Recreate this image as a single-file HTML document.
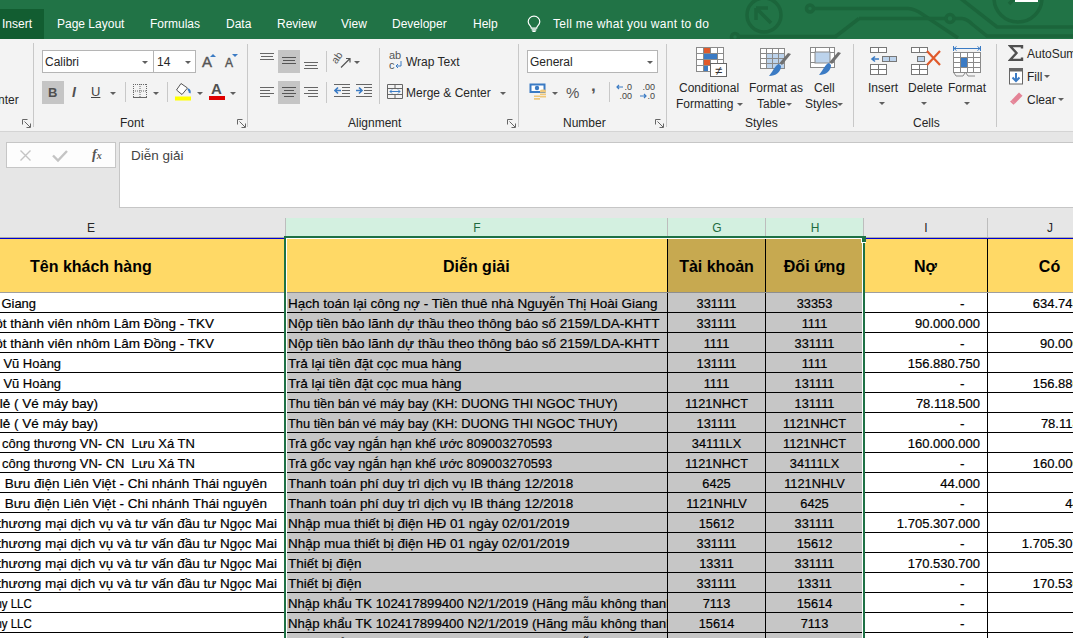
<!DOCTYPE html>
<html><head><meta charset="utf-8">
<style>
*{margin:0;padding:0;box-sizing:border-box}
html,body{width:1073px;height:638px;overflow:hidden;background:#fff;font-family:"Liberation Sans",sans-serif;position:relative}
.abs{position:absolute}
#tabs{position:absolute;left:0;top:0;width:1073px;height:39px;background:#217346}
.tab{position:absolute;top:17px;color:#fff;font-size:12px;line-height:14px;white-space:nowrap}
#ribbon{position:absolute;left:0;top:39px;width:1073px;height:93px;background:#f3f3f3;border-bottom:1px solid #d4d4d4}
.rt{position:absolute;font-size:12px;line-height:14px;color:#262626;white-space:nowrap}
.gl{position:absolute;top:116px;font-size:12px;line-height:14px;color:#262626;white-space:nowrap}
.sep{position:absolute;width:1px;background:#c8c8c8}
.dd{position:absolute;width:0;height:0;border-left:3px solid transparent;border-right:3px solid transparent;border-top:3px solid #5f5f5f}
#fbar{position:absolute;left:0;top:132px;width:1073px;height:86px;background:#e6e6e6}
#colh{position:absolute;left:0;top:218px;width:1073px;height:20px;background:#e6e6e6;border-bottom:1px solid #ababab}
.ch{position:absolute;top:218px;height:19px;font-size:12px;line-height:21px;text-align:center;color:#262626}
.t{position:absolute;height:19px;font-size:13.5px;line-height:21px;white-space:pre;color:#000}
.c{text-align:center}
.fc{position:absolute;left:288px;width:379px;height:19px;overflow:hidden;font-size:13.5px;line-height:21px;white-space:nowrap;color:#000}
.fc span{display:inline-block;transform-origin:0 50%}
.num{font-size:13px}
.gh{font-size:12.8px}
.t,.fc{-webkit-text-stroke:0.2px #000}
.hl{position:absolute;left:0;width:1073px;height:1px;background:#000}
.vl{position:absolute;width:1px;background:#000}
</style></head><body>

<!-- tab bar -->
<div id="tabs">
  <div class="abs" style="left:0;top:9px;width:44px;height:30px;background:#125d31"></div>
  <svg class="abs" style="left:0;top:0" width="1073" height="39" viewBox="0 0 1073 39">
    <g fill="none" stroke="#1b653b" stroke-width="3.5">
      <circle cx="764" cy="15" r="17"/>
      <path d="M756 8 L771 23 M756 8 L756 20 M756 8 L768 8" stroke-width="3.5"/>
      <circle cx="810" cy="8.5" r="3.5"/>
      <path d="M814 8.5 L900 8.5 L908 8.5 Q915 9 922 14 L958 38"/>
      <path d="M859 18.5 L945 18.5 M955 18.5 L962 18.5 Q967 19 972 24 L987 36 L1073 36"/>
      <circle cx="950" cy="18.5" r="4"/>
      <path d="M835 37 L859 18.5"/>
      <circle cx="735" cy="37" r="3.5"/>
      <path d="M739 36.5 L836 36.5"/>
      <path d="M960 -2 L997 27 L1073 27"/>
      <circle cx="1018" cy="-2" r="24"/>
      <path d="M1009 4 L1016 -3"/>
    </g>
    <rect x="1015" y="0" width="23" height="2" fill="#fff"/>
  </svg>
  <div class="tab" style="left:2px">Insert</div>
  <div class="tab" style="left:57px">Page Layout</div>
  <div class="tab" style="left:150px">Formulas</div>
  <div class="tab" style="left:226px">Data</div>
  <div class="tab" style="left:277px">Review</div>
  <div class="tab" style="left:341px">View</div>
  <div class="tab" style="left:392px">Developer</div>
  <div class="tab" style="left:473px">Help</div>
  <svg class="abs" style="left:526px;top:15px" width="16" height="17" viewBox="0 0 16 17">
    <path d="M8 1.2 C4.6 1.2 2.2 3.7 2.2 6.7 C2.2 8.8 3.4 10 4.4 11.1 C5 11.8 5.3 12.4 5.3 13.2 L10.7 13.2 C10.7 12.4 11 11.8 11.6 11.1 C12.6 10 13.8 8.8 13.8 6.7 C13.8 3.7 11.4 1.2 8 1.2 Z" fill="none" stroke="#fff" stroke-width="1.2"/>
    <path d="M5.6 14.8 L10.4 14.8 M6.4 16.3 L9.6 16.3" stroke="#fff" stroke-width="1.2"/>
  </svg>
  <div class="tab" style="left:553px;letter-spacing:0.3px">Tell me what you want to do</div>
</div>

<!-- ribbon -->
<div id="ribbon"></div>
<!-- clipboard remnant -->
<div class="rt" style="left:-2px;top:93px">nter</div>
<svg class="abs" style="left:22px;top:119px" width="10" height="10" viewBox="0 0 10 10"><path d="M0.5 5.5 V0.5 H5.5 M2.5 2.5 L8 8 M8.5 4.5 V8.5 H4.5" stroke="#666" stroke-width="1" fill="none"/></svg>
<div class="sep" style="left:33px;top:43px;height:84px"></div>

<!-- Font group -->
<div class="abs" style="left:42px;top:50px;width:112px;height:23px;background:#fff;border:1px solid #b5b5b5"></div>
<div class="abs" style="left:153px;top:50px;width:43px;height:23px;background:#fff;border:1px solid #b5b5b5"></div>
<div class="rt" style="left:45px;top:55px">Calibri</div>
<div class="dd" style="left:142px;top:61px"></div>
<div class="rt" style="left:157px;top:55px">14</div>
<div class="dd" style="left:185px;top:61px"></div>
<div class="abs" style="left:202px;top:54px;font-size:15px;line-height:16px;color:#555;-webkit-text-stroke:0.4px #555">A</div>
<div class="abs" style="left:210px;top:54px;width:0;height:0;border-left:3px solid transparent;border-right:3px solid transparent;border-bottom:3px solid #3b7bc4"></div>
<div class="abs" style="left:225px;top:56px;font-size:12px;line-height:14px;color:#555;-webkit-text-stroke:0.4px #555">A</div>
<div class="abs" style="left:232px;top:54px;width:0;height:0;border-left:3px solid transparent;border-right:3px solid transparent;border-top:3px solid #3b7bc4"></div>

<div class="abs" style="left:42px;top:81px;width:22px;height:23px;background:#c5c5c5"></div>
<div class="abs" style="left:48px;top:85px;font-size:13px;font-weight:bold;line-height:15px;color:#505050">B</div>
<div class="abs" style="left:72px;top:85px;font-size:14px;font-style:italic;font-weight:bold;line-height:15px;color:#505050">I</div>
<div class="abs" style="left:91px;top:84px;font-size:13px;line-height:15px;color:#444;text-decoration:underline">U</div>
<div class="dd" style="left:110px;top:92px"></div>
<div class="sep" style="left:125px;top:82px;height:20px"></div>
<svg class="abs" style="left:133px;top:84px" width="14" height="14" viewBox="0 0 14 14"><path d="M0.5 0 V13 M7 0 V13 M13.5 0 V13 M0 0.5 H14 M0 7 H14" stroke="#666" stroke-width="1" stroke-dasharray="1 1" fill="none"/><path d="M0 13.5 H14" stroke="#666" stroke-width="1"/></svg>
<div class="dd" style="left:153px;top:92px"></div>
<div class="sep" style="left:167px;top:82px;height:20px"></div>
<svg class="abs" style="left:175px;top:82px" width="18" height="19" viewBox="0 0 18 19"><path d="M6 1.5 L1.5 8 L7 12.5 L12.5 6 Z" fill="#fff" stroke="#555" stroke-width="1"/><path d="M13 7 Q15.5 9 14.5 11" stroke="#3b7bc4" stroke-width="2" fill="none"/><rect x="0" y="14.5" width="16" height="4" fill="#ffff00"/></svg>
<div class="dd" style="left:197px;top:92px"></div>
<div class="abs" style="left:211px;top:81px;font-size:15px;font-weight:bold;line-height:16px;color:#505050">A</div>
<div class="abs" style="left:209px;top:96px;width:16px;height:4px;background:#e00000"></div>
<div class="dd" style="left:230px;top:92px"></div>
<div class="gl" style="left:120px">Font</div>
<svg class="abs" style="left:237px;top:119px" width="10" height="10" viewBox="0 0 10 10"><path d="M0.5 5.5 V0.5 H5.5 M2.5 2.5 L8 8 M8.5 4.5 V8.5 H4.5" stroke="#666" stroke-width="1" fill="none"/></svg>
<div class="sep" style="left:247px;top:44px;height:83px"></div>

<!-- Alignment group -->
<svg class="abs" style="left:260px;top:51px" width="16" height="12" viewBox="0 0 16 12"><path d="M0 2.5 H14 M1 5.5 H13 M0 8.5 H14" stroke="#666" stroke-width="1"/></svg>
<div class="abs" style="left:278px;top:50px;width:22px;height:23px;background:#c5c5c5"></div>
<svg class="abs" style="left:282px;top:51px" width="16" height="20" viewBox="0 0 16 20"><path d="M0 6.5 H14 M1 9.5 H13 M0 12.5 H14" stroke="#555" stroke-width="1"/></svg>
<svg class="abs" style="left:304px;top:52px" width="16" height="20" viewBox="0 0 16 20"><path d="M0 10.5 H14 M1 13.5 H13 M0 16.5 H14" stroke="#666" stroke-width="1"/></svg>
<div class="sep" style="left:326px;top:51px;height:21px"></div>
<svg class="abs" style="left:332px;top:50px" width="22" height="20" viewBox="0 0 22 20"><text x="0" y="0" font-size="10.5" fill="#555" font-family="Liberation Sans" transform="translate(4.5 14.5) rotate(-55)">ab</text><path d="M9 17.5 L18 8.5 M14 8.5 H18 V12.5" stroke="#555" stroke-width="1.2" fill="none"/></svg>
<div class="dd" style="left:354px;top:61px"></div>
<div class="sep" style="left:379px;top:48px;height:56px"></div>
<div class="abs" style="left:389px;top:50px;font-size:11px;line-height:10px;color:#555">ab<br>c</div>
<svg class="abs" style="left:395px;top:61px" width="8" height="8" viewBox="0 0 8 8"><path d="M6 0 V5 H1 M3 3 L1 5 L3 7" stroke="#3b7bc4" stroke-width="1" fill="none"/></svg>
<div class="rt" style="left:406px;top:55px">Wrap Text</div>

<svg class="abs" style="left:260px;top:86px" width="16" height="16" viewBox="0 0 16 16"><path d="M0 1.5 H14 M0 4.5 H10 M0 7.5 H14 M0 10.5 H10" stroke="#666" stroke-width="1"/></svg>
<div class="abs" style="left:278px;top:81px;width:22px;height:23px;background:#c5c5c5"></div>
<svg class="abs" style="left:282px;top:86px" width="16" height="16" viewBox="0 0 16 16"><path d="M0 1.5 H14 M2 4.5 H12 M0 7.5 H14 M2 10.5 H12" stroke="#555" stroke-width="1"/></svg>
<svg class="abs" style="left:304px;top:86px" width="16" height="16" viewBox="0 0 16 16"><path d="M0 1.5 H14 M4 4.5 H14 M0 7.5 H14 M4 10.5 H14" stroke="#666" stroke-width="1"/></svg>
<div class="sep" style="left:326px;top:82px;height:21px"></div>
<svg class="abs" style="left:334px;top:84px" width="40" height="16" viewBox="0 0 40 16"><path d="M0 0.5 H16 M8 3.5 H16 M8 6.5 H16 M8 9.5 H16 M0 12.5 H16" stroke="#666" stroke-width="1"/><path d="M1 6.5 H7 M4 3.5 L1 6.5 L4 9.5" stroke="#3b7bc4" stroke-width="1.6" fill="none"/><path d="M22 0.5 H38 M30 3.5 H38 M30 6.5 H38 M30 9.5 H38 M22 12.5 H38" stroke="#666" stroke-width="1"/><path d="M22 6.5 H28 M25 3.5 L28 6.5 L25 9.5" stroke="#3b7bc4" stroke-width="1.6" fill="none"/></svg>
<svg class="abs" style="left:387px;top:84px" width="16" height="16" viewBox="0 0 16 16"><path d="M0.5 0.5 H15.5 V14.5 H0.5 Z M0.5 4.5 H15.5 M0.5 10.5 H15.5 M8 0.5 V4.5 M8 10.5 V14.5" stroke="#666" stroke-width="1" fill="none"/><path d="M3 7.5 H13 M5 5.5 L3 7.5 L5 9.5 M11 5.5 L13 7.5 L11 9.5" stroke="#3b7bc4" stroke-width="1" fill="none"/></svg>
<div class="rt" style="left:406px;top:86px">Merge &amp; Center</div>
<div class="dd" style="left:500px;top:92px"></div>
<div class="gl" style="left:348px">Alignment</div>
<svg class="abs" style="left:507px;top:119px" width="10" height="10" viewBox="0 0 10 10"><path d="M0.5 5.5 V0.5 H5.5 M2.5 2.5 L8 8 M8.5 4.5 V8.5 H4.5" stroke="#666" stroke-width="1" fill="none"/></svg>
<div class="sep" style="left:518px;top:44px;height:83px"></div>

<!-- Number group -->
<div class="abs" style="left:527px;top:50px;width:131px;height:23px;background:#fff;border:1px solid #b5b5b5"></div>
<div class="rt" style="left:530px;top:55px">General</div>
<div class="dd" style="left:647px;top:61px"></div>
<svg class="abs" style="left:529px;top:83px" width="20" height="18" viewBox="0 0 20 18"><rect x="0.5" y="0.5" width="16" height="9.5" fill="#3b7bc4"/><rect x="2.5" y="2.5" width="12" height="5.5" fill="#fff"/><circle cx="8" cy="5" r="2.2" fill="#3b7bc4"/><path d="M11 8 h6 v1.6 h-6 z M11 10.4 h6 v1.6 h-6 z M11 12.8 h6 v1.6 h-6 z" fill="#f0c87a"/><path d="M5 12.5 h6 v1.6 h-6 z M5 15 h6 v1.8 h-6 z" fill="#f0c87a"/><ellipse cx="14" cy="7.5" rx="3" ry="1" fill="#f0c87a"/></svg>
<div class="dd" style="left:552px;top:92px"></div>
<div class="abs" style="left:566px;top:84px;font-size:15px;line-height:17px;color:#555">%</div>
<div class="abs" style="left:591px;top:77px;font-size:17px;font-weight:bold;line-height:17px;color:#555">,</div>
<div class="sep" style="left:609px;top:82px;height:20px"></div>
<div class="abs" style="left:618px;top:83px;font-size:9px;line-height:9px;color:#444;text-align:right;width:14px">.0<br>.00</div>
<svg class="abs" style="left:616px;top:84px" width="8" height="6" viewBox="0 0 8 6"><path d="M1 3 H7 M3 1 L1 3 L3 5" stroke="#3b7bc4" stroke-width="1.2" fill="none"/></svg>
<div class="abs" style="left:641px;top:83px;font-size:9px;line-height:9px;color:#444;text-align:right;width:14px">.00<br>.0</div>
<svg class="abs" style="left:640px;top:93px" width="8" height="6" viewBox="0 0 8 6"><path d="M0 3 H6 M4 1 L6 3 L4 5" stroke="#3b7bc4" stroke-width="1.2" fill="none"/></svg>
<div class="gl" style="left:563px">Number</div>
<svg class="abs" style="left:655px;top:119px" width="10" height="10" viewBox="0 0 10 10"><path d="M0.5 5.5 V0.5 H5.5 M2.5 2.5 L8 8 M8.5 4.5 V8.5 H4.5" stroke="#666" stroke-width="1" fill="none"/></svg>
<div class="sep" style="left:666px;top:44px;height:83px"></div>

<!-- Styles group -->
<svg class="abs" style="left:696px;top:47px" width="31" height="31" viewBox="0 0 31 31">
  <rect x="0.5" y="0.5" width="27" height="24" fill="#fff" stroke="#8a8a8a"/>
  <path d="M0.5 6.5 H27.5 M0.5 12.5 H27.5 M0.5 18.5 H27.5 M7.5 0.5 V24.5 M14.5 0.5 V24.5 M21.5 0.5 V24.5" stroke="#8a8a8a" stroke-width="1"/>
  <rect x="8" y="1" width="6" height="5" fill="#e05a2b"/><rect x="8" y="7" width="13" height="5" fill="#3b7bc4"/><rect x="8" y="13" width="6" height="5" fill="#e05a2b"/><rect x="8" y="19" width="4" height="5" fill="#3b7bc4"/>
  <rect x="14.5" y="16.5" width="16" height="13" fill="#fff" stroke="#666"/>
  <text x="22.5" y="27.5" font-size="13" text-anchor="middle" fill="#333" font-family="Liberation Sans">≠</text>
</svg>
<div class="rt" style="left:679px;top:81px">Conditional</div>
<div class="rt" style="left:676px;top:97px">Formatting</div>
<div class="dd" style="left:737px;top:103px"></div>
<svg class="abs" style="left:760px;top:48px" width="32" height="30" viewBox="0 0 32 30">
  <rect x="0.5" y="0.5" width="24" height="20" fill="#fff" stroke="#8a8a8a"/>
  <rect x="6" y="5" width="18" height="15" fill="#bcd3ec"/>
  <path d="M0.5 5.5 H24.5 M0.5 10.5 H24.5 M0.5 15.5 H24.5 M6.5 0.5 V20.5 M12.5 0.5 V20.5 M18.5 0.5 V20.5" stroke="#8a8a8a" stroke-width="1"/>
  <path d="M31 6 L22 17 L19.5 15 L28 5 Z" fill="#707070"/>
  <path d="M19 16 C15 17 14 22 9 28 C16 28 21 24 21 18 Z" fill="#3b7bc4"/>
</svg>
<div class="rt" style="left:749px;top:81px">Format as</div>
<div class="rt" style="left:757px;top:97px">Table</div>
<div class="dd" style="left:786px;top:103px"></div>
<svg class="abs" style="left:810px;top:47px" width="32" height="30" viewBox="0 0 32 30">
  <rect x="0.5" y="0.5" width="24" height="20" fill="#fff" stroke="#8a8a8a"/>
  <rect x="5" y="5" width="15" height="11" fill="#bcd3ec" stroke="#8a8a8a"/>
  <path d="M0.5 5.5 H5 M20 5.5 H24.5 M0.5 15.5 H5 M20 15.5 H24.5 M5.5 0.5 V5 M19.5 0.5 V5" stroke="#8a8a8a" stroke-width="1"/>
  <path d="M31 6 L22 17 L19.5 15 L28 5 Z" fill="#707070"/>
  <path d="M19 16 C15 17 14 22 9 28 C16 28 21 24 21 18 Z" fill="#3b7bc4"/>
</svg>
<div class="rt" style="left:814px;top:81px">Cell</div>
<div class="rt" style="left:805px;top:97px">Styles</div>
<div class="dd" style="left:837px;top:103px"></div>
<div class="gl" style="left:745px">Styles</div>
<div class="sep" style="left:853px;top:44px;height:83px"></div>

<!-- Cells group -->
<svg class="abs" style="left:870px;top:47px" width="28" height="28" viewBox="0 0 28 28">
  <rect x="0.5" y="0.5" width="8" height="5" fill="#fff" stroke="#777"/><rect x="8.5" y="0.5" width="8" height="5" fill="#fff" stroke="#777"/>
  <rect x="12.5" y="9.5" width="7" height="5" fill="#bcd3ec" stroke="#777"/><rect x="19.5" y="9.5" width="7" height="5" fill="#bcd3ec" stroke="#777"/>
  <path d="M2 12 H9 M5 9.5 L2 12 L5 14.5" stroke="#3b7bc4" stroke-width="1.6" fill="none"/>
  <rect x="0.5" y="17.5" width="8" height="5" fill="#fff" stroke="#777"/><rect x="8.5" y="17.5" width="8" height="5" fill="#fff" stroke="#777"/>
  <rect x="0.5" y="22.5" width="8" height="5" fill="#fff" stroke="#777"/><rect x="8.5" y="22.5" width="8" height="5" fill="#fff" stroke="#777"/>
</svg>
<div class="rt" style="left:868px;top:81px">Insert</div>
<div class="dd" style="left:879px;top:102px"></div>
<svg class="abs" style="left:911px;top:47px" width="30" height="28" viewBox="0 0 30 28">
  <rect x="0.5" y="0.5" width="8" height="5" fill="#fff" stroke="#777"/><rect x="8.5" y="0.5" width="8" height="5" fill="#fff" stroke="#777"/>
  <rect x="6.5" y="9.5" width="7" height="5" fill="#bcd3ec" stroke="#777"/>
  <rect x="0.5" y="17.5" width="8" height="5" fill="#fff" stroke="#777"/><rect x="8.5" y="17.5" width="8" height="5" fill="#fff" stroke="#777"/>
  <rect x="0.5" y="22.5" width="8" height="5" fill="#fff" stroke="#777"/><rect x="8.5" y="22.5" width="8" height="5" fill="#fff" stroke="#777"/>
  <path d="M16 4 L29 18 M29 4 L16 18" stroke="#e05a2b" stroke-width="2.2"/>
</svg>
<div class="rt" style="left:908px;top:81px">Delete</div>
<div class="dd" style="left:921px;top:102px"></div>
<svg class="abs" style="left:953px;top:46px" width="29" height="31" viewBox="0 0 29 31">
  <path d="M1 2.5 H27 M3.5 0.5 L1 2.5 L3.5 4.5 M24.5 0.5 L27 2.5 L24.5 4.5 M0.5 0 V5 M27.5 0 V5" stroke="#3b7bc4" stroke-width="1" fill="none"/>
  <rect x="0.5" y="6.5" width="27" height="20" fill="#fff" stroke="#8a8a8a"/>
  <path d="M0.5 11.5 H27.5 M0.5 16.5 H27.5 M0.5 21.5 H27.5 M7.5 6.5 V26.5 M14.5 6.5 V26.5 M20.5 6.5 V26.5" stroke="#8a8a8a" stroke-width="1"/>
  <rect x="8" y="12" width="6" height="9" fill="#3b7bc4"/>
  <path d="M1 27 L3 30 H10 L12 27 M13 27 L15 30 H22" stroke="#8a8a8a" stroke-width="1" fill="none"/>
</svg>
<div class="rt" style="left:948px;top:81px">Format</div>
<div class="dd" style="left:964px;top:102px"></div>
<div class="gl" style="left:913px">Cells</div>
<div class="sep" style="left:996px;top:44px;height:83px"></div>

<!-- Editing group -->
<svg class="abs" style="left:1008px;top:45px" width="16" height="16" viewBox="0 0 16 16"><path d="M14 3.5 V1 H2 L8.5 8 L2 15 H14 V12.5" stroke="#505050" stroke-width="2.4" fill="none"/></svg>
<div class="rt" style="left:1027px;top:47px">AutoSum</div>
<svg class="abs" style="left:1009px;top:68px" width="14" height="17" viewBox="0 0 14 17"><rect x="0.5" y="0.5" width="13" height="15.5" fill="#fff" stroke="#666"/><rect x="0.5" y="0.5" width="13" height="3" fill="#666"/><path d="M7 5 V13 M3.5 9.5 L7 13 L10.5 9.5" stroke="#3b7bc4" stroke-width="2" fill="none"/></svg>
<div class="rt" style="left:1027px;top:70px">Fill</div>
<div class="dd" style="left:1044px;top:75px"></div>
<svg class="abs" style="left:1009px;top:92px" width="14" height="13" viewBox="0 0 14 13"><path d="M10 0.5 L13.5 3.8 L6 11.5 L2.5 8.2 Z" fill="#e48396"/><path d="M1 9.5 L2.5 8.2 L6 11.5 L4.5 12.8 Z" fill="#e48396"/></svg>
<div class="rt" style="left:1027px;top:93px">Clear</div>
<div class="dd" style="left:1058px;top:98px"></div>


<!-- formula bar -->
<div id="fbar"></div>
<div class="abs" style="left:6px;top:142px;width:110px;height:26px;background:#fdfdfd;border:1px solid #c6c6c6"></div>
<svg class="abs" style="left:18px;top:148px" width="100" height="16" viewBox="0 0 100 16">
  <path d="M2.5 2.5 L12.5 12.5 M12.5 2.5 L2.5 12.5" stroke="#c4c4c4" stroke-width="1.4" fill="none"/>
  <path d="M35 7.5 L40 12.5 L49 3" stroke="#c4c4c4" stroke-width="2.4" fill="none"/>
</svg>
<div class="abs" style="left:92px;top:147px;font-family:'Liberation Serif',serif;font-style:italic;font-weight:bold;font-size:14px;color:#555;line-height:16px">f<span style="font-size:10px">x</span></div>
<div class="abs" style="left:119px;top:142px;width:960px;height:66px;background:#fff;border:1px solid #c6c6c6"></div>
<div class="abs" style="left:131px;top:148px;font-size:13.5px;line-height:16px;color:#444">Diễn giải</div>

<!-- column headers -->
<div id="colh"></div>
<div class="abs" style="left:285px;top:218px;width:578px;height:19px;background:#d3f0e0"></div>
<div class="abs" style="left:285px;top:218px;width:1px;height:19px;background:#bdbdbd"></div>
<div class="abs" style="left:667px;top:218px;width:1px;height:19px;background:#bdbdbd"></div>
<div class="abs" style="left:765px;top:218px;width:1px;height:19px;background:#bdbdbd"></div>
<div class="abs" style="left:863px;top:218px;width:1px;height:19px;background:#bdbdbd"></div>
<div class="abs" style="left:987px;top:218px;width:1px;height:19px;background:#bdbdbd"></div>
<div class="ch" style="left:41px;width:100px">E</div>
<div class="ch" style="left:427px;width:100px;color:#1e6b3f">F</div>
<div class="ch" style="left:667px;width:100px;color:#1e6b3f">G</div>
<div class="ch" style="left:765px;width:100px;color:#1e6b3f">H</div>
<div class="ch" style="left:876px;width:100px">I</div>
<div class="ch" style="left:1000px;width:100px">J</div>

<!-- header row -->
<div class="abs" style="left:0;top:238px;width:1073px;height:1px;background:#0000d4"></div>
<div class="abs" style="left:0;top:239px;width:1073px;height:53px;background:#ffd966"></div>
<div class="abs" style="left:668px;top:239px;width:195px;height:53px;background:#c7a950"></div>
<div class="abs" style="left:0;top:292px;width:1073px;height:1px;background:#9e9e9e"></div>
<div class="abs" style="left:287px;top:292px;width:575px;height:1px;background:#8e8e8e"></div>
<div class="abs" style="left:667px;top:239px;width:1px;height:53px;background:#000"></div>
<div class="abs" style="left:765px;top:239px;width:1px;height:53px;background:#000"></div>
<div class="abs" style="left:987px;top:239px;width:1px;height:53px;background:#000"></div>
<div class="abs" style="left:0;top:257px;width:285px;text-align:center;font-weight:bold;font-size:16px;line-height:20px;padding-left:-0px"><span style="position:absolute;left:30px">Tên khách hàng</span></div>
<div class="abs" style="left:443px;top:257px;font-weight:bold;font-size:16px;line-height:20px">Diễn giải</div>
<div class="abs" style="left:668px;top:257px;width:97px;text-align:center;font-weight:bold;font-size:16px;line-height:20px">Tài khoản</div>
<div class="abs" style="left:766px;top:257px;width:97px;text-align:center;font-weight:bold;font-size:16px;line-height:20px">Đối ứng</div>
<div class="abs" style="left:864px;top:257px;width:123px;text-align:center;font-weight:bold;font-size:16px;line-height:20px">Nợ</div>
<div class="abs" style="left:988px;top:257px;width:123px;text-align:center;font-weight:bold;font-size:16px;line-height:20px">Có</div>

<!-- data region -->
<div class="abs" style="left:287px;top:293px;width:575px;height:345px;background:#c6c6c6"></div>
<div class="vl" style="left:667px;top:293px;height:345px"></div>
<div class="vl" style="left:765px;top:293px;height:345px"></div>
<div class="vl" style="left:987px;top:293px;height:345px"></div>
<div class="t e" style="top:293px;right:1037.0px;transform:scaleX(0.96);transform-origin:100% 50%;">Giang</div>
<div class="fc" style="top:293px"><span style="">Hạch toán lại công nợ - Tiền thuê nhà Nguyễn Thị Hoài Giang</span></div>
<div class="t c gh" style="top:293px;left:668px;width:97px">331111</div>
<div class="t c gh" style="top:293px;left:766px;width:97px">33353</div>
<div class="t" style="top:293px;left:960px">-</div>
<div class="t num" style="top:293px;right:-32px">634.745.000</div>
<div class="hl" style="top:312px"></div>
<div class="t e" style="top:313px;right:859.0px;">ột thành viên nhôm Lâm Đồng - TKV</div>
<div class="fc" style="top:313px"><span style="">Nộp tiền bảo lãnh dự thầu theo thông báo số 2159/LDA-KHTT</span></div>
<div class="t c gh" style="top:313px;left:668px;width:97px">331111</div>
<div class="t c gh" style="top:313px;left:766px;width:97px">1111</div>
<div class="t num" style="top:313px;right:93px">90.000.000</div>
<div class="hl" style="top:332px"></div>
<div class="t e" style="top:333px;right:859.0px;">ột thành viên nhôm Lâm Đồng - TKV</div>
<div class="fc" style="top:333px"><span style="">Nộp tiền bảo lãnh dự thầu theo thông báo số 2159/LDA-KHTT</span></div>
<div class="t c gh" style="top:333px;left:668px;width:97px">1111</div>
<div class="t c gh" style="top:333px;left:766px;width:97px">331111</div>
<div class="t" style="top:333px;left:960px">-</div>
<div class="t num" style="top:333px;right:-32px">90.000.000</div>
<div class="hl" style="top:352px"></div>
<div class="t e" style="top:353px;right:1011.5px;transform:scaleX(0.96);transform-origin:100% 50%;">Vũ Hoàng</div>
<div class="fc" style="top:353px"><span style="">Trả lại tiền đặt cọc mua hàng</span></div>
<div class="t c gh" style="top:353px;left:668px;width:97px">131111</div>
<div class="t c gh" style="top:353px;left:766px;width:97px">1111</div>
<div class="t num" style="top:353px;right:93px">156.880.750</div>
<div class="hl" style="top:372px"></div>
<div class="t e" style="top:373px;right:1011.5px;transform:scaleX(0.96);transform-origin:100% 50%;">Vũ Hoàng</div>
<div class="fc" style="top:373px"><span style="">Trả lại tiền đặt cọc mua hàng</span></div>
<div class="t c gh" style="top:373px;left:668px;width:97px">1111</div>
<div class="t c gh" style="top:373px;left:766px;width:97px">131111</div>
<div class="t" style="top:373px;left:960px">-</div>
<div class="t num" style="top:373px;right:-32px">156.880.750</div>
<div class="hl" style="top:392px"></div>
<div class="t e" style="top:393px;right:975.0px;">lẻ ( Vé máy bay)</div>
<div class="fc" style="top:393px"><span style="transform:scaleX(0.95);">Thu tiền bán vé máy bay (KH: DUONG THI NGOC THUY)</span></div>
<div class="t c gh" style="top:393px;left:668px;width:97px">1121NHCT</div>
<div class="t c gh" style="top:393px;left:766px;width:97px">131111</div>
<div class="t num" style="top:393px;right:93px">78.118.500</div>
<div class="hl" style="top:412px"></div>
<div class="t e" style="top:413px;right:975.0px;">lẻ ( Vé máy bay)</div>
<div class="fc" style="top:413px"><span style="transform:scaleX(0.95);">Thu tiền bán vé máy bay (KH: DUONG THI NGOC THUY)</span></div>
<div class="t c gh" style="top:413px;left:668px;width:97px">131111</div>
<div class="t c gh" style="top:413px;left:766px;width:97px">1121NHCT</div>
<div class="t" style="top:413px;left:960px">-</div>
<div class="t num" style="top:413px;right:-32px">78.118.500</div>
<div class="hl" style="top:432px"></div>
<div class="t e" style="top:433px;right:878.0px;transform:scaleX(0.96);transform-origin:100% 50%;">công thương VN- CN  Lưu Xá TN</div>
<div class="fc" style="top:433px"><span style="transform:scaleX(0.951);">Trả gốc vay ngắn hạn khế ước 809003270593</span></div>
<div class="t c gh" style="top:433px;left:668px;width:97px">34111LX</div>
<div class="t c gh" style="top:433px;left:766px;width:97px">1121NHCT</div>
<div class="t num" style="top:433px;right:93px">160.000.000</div>
<div class="hl" style="top:452px"></div>
<div class="t e" style="top:453px;right:878.0px;transform:scaleX(0.96);transform-origin:100% 50%;">công thương VN- CN  Lưu Xá TN</div>
<div class="fc" style="top:453px"><span style="transform:scaleX(0.951);">Trả gốc vay ngắn hạn khế ước 809003270593</span></div>
<div class="t c gh" style="top:453px;left:668px;width:97px">1121NHCT</div>
<div class="t c gh" style="top:453px;left:766px;width:97px">34111LX</div>
<div class="t" style="top:453px;left:960px">-</div>
<div class="t num" style="top:453px;right:-32px">160.000.000</div>
<div class="hl" style="top:472px"></div>
<div class="t e" style="top:473px;right:806.0px;">Bưu điện Liên Việt - Chi nhánh Thái nguyên</div>
<div class="fc" style="top:473px"><span style="">Thanh toán phí duy trì dịch vụ IB tháng 12/2018</span></div>
<div class="t c gh" style="top:473px;left:668px;width:97px">6425</div>
<div class="t c gh" style="top:473px;left:766px;width:97px">1121NHLV</div>
<div class="t num" style="top:473px;right:93px">44.000</div>
<div class="hl" style="top:492px"></div>
<div class="t e" style="top:493px;right:806.0px;">Bưu điện Liên Việt - Chi nhánh Thái nguyên</div>
<div class="fc" style="top:493px"><span style="">Thanh toán phí duy trì dịch vụ IB tháng 12/2018</span></div>
<div class="t c gh" style="top:493px;left:668px;width:97px">1121NHLV</div>
<div class="t c gh" style="top:493px;left:766px;width:97px">6425</div>
<div class="t" style="top:493px;left:960px">-</div>
<div class="t num" style="top:493px;right:-32px">44.000</div>
<div class="hl" style="top:512px"></div>
<div class="t e" style="top:513px;right:796.0px;">thương mại dịch vụ và tư vấn đầu tư Ngọc Mai</div>
<div class="fc" style="top:513px"><span style="">Nhập mua thiết bị điện HĐ 01 ngày 02/01/2019</span></div>
<div class="t c gh" style="top:513px;left:668px;width:97px">15612</div>
<div class="t c gh" style="top:513px;left:766px;width:97px">331111</div>
<div class="t num" style="top:513px;right:93px">1.705.307.000</div>
<div class="hl" style="top:532px"></div>
<div class="t e" style="top:533px;right:796.0px;">thương mại dịch vụ và tư vấn đầu tư Ngọc Mai</div>
<div class="fc" style="top:533px"><span style="">Nhập mua thiết bị điện HĐ 01 ngày 02/01/2019</span></div>
<div class="t c gh" style="top:533px;left:668px;width:97px">331111</div>
<div class="t c gh" style="top:533px;left:766px;width:97px">15612</div>
<div class="t" style="top:533px;left:960px">-</div>
<div class="t num" style="top:533px;right:-32px">1.705.307.000</div>
<div class="hl" style="top:552px"></div>
<div class="t e" style="top:553px;right:796.0px;">thương mại dịch vụ và tư vấn đầu tư Ngọc Mai</div>
<div class="fc" style="top:553px"><span style="">Thiết bị điện</span></div>
<div class="t c gh" style="top:553px;left:668px;width:97px">13311</div>
<div class="t c gh" style="top:553px;left:766px;width:97px">331111</div>
<div class="t num" style="top:553px;right:93px">170.530.700</div>
<div class="hl" style="top:572px"></div>
<div class="t e" style="top:573px;right:796.0px;">thương mại dịch vụ và tư vấn đầu tư Ngọc Mai</div>
<div class="fc" style="top:573px"><span style="">Thiết bị điện</span></div>
<div class="t c gh" style="top:573px;left:668px;width:97px">331111</div>
<div class="t c gh" style="top:573px;left:766px;width:97px">13311</div>
<div class="t" style="top:573px;left:960px">-</div>
<div class="t num" style="top:573px;right:-32px">170.530.700</div>
<div class="hl" style="top:592px"></div>
<div class="t e" style="top:593px;right:1041.0px;transform:scaleX(0.85);transform-origin:100% 50%;">ny LLC</div>
<div class="fc" style="top:593px"><span style="transform:scaleX(0.977);">Nhập khẩu TK 102417899400 N2/1/2019 (Hãng mẫu không thanh toán)</span></div>
<div class="t c gh" style="top:593px;left:668px;width:97px">7113</div>
<div class="t c gh" style="top:593px;left:766px;width:97px">15614</div>
<div class="t" style="top:593px;left:960px">-</div>
<div class="hl" style="top:612px"></div>
<div class="t e" style="top:613px;right:1041.0px;transform:scaleX(0.85);transform-origin:100% 50%;">ny LLC</div>
<div class="fc" style="top:613px"><span style="transform:scaleX(0.977);">Nhập khẩu TK 102417899400 N2/1/2019 (Hãng mẫu không thanh toán)</span></div>
<div class="t c gh" style="top:613px;left:668px;width:97px">15614</div>
<div class="t c gh" style="top:613px;left:766px;width:97px">7113</div>
<div class="t" style="top:613px;left:960px">-</div>
<div class="hl" style="top:632px"></div>
<div class="t e" style="top:633px;right:1041.0px;transform:scaleX(0.85);transform-origin:100% 50%;">ny LLC</div>
<div class="fc" style="top:633px"><span style="transform:scaleX(0.977);">Nhập khẩu TK 102417899400 N2/1/2019 (Hãng mẫu không thanh toán)</span></div>
<div class="t c gh" style="top:633px;left:668px;width:97px">7113</div>
<div class="t c gh" style="top:633px;left:766px;width:97px">15614</div>
<div class="t" style="top:633px;left:960px">-</div>
<div class="hl" style="top:652px"></div>

<!-- selection border -->
<div class="abs" style="left:284px;top:236px;width:2px;height:402px;background:#1e7145"></div>
<div class="abs" style="left:863px;top:236px;width:2px;height:402px;background:#1e7145"></div>
<div class="abs" style="left:284px;top:236px;width:581px;height:2px;background:#1e7145"></div>
<div class="abs" style="left:286px;top:238px;width:1px;height:400px;background:#fff"></div>
<div class="abs" style="left:862px;top:238px;width:1px;height:400px;background:#fff"></div>
<div class="abs" style="left:286px;top:238px;width:577px;height:1px;background:#fff"></div>
<div class="abs" style="left:862px;top:236px;width:4px;height:6px;background:#1e7145"></div>
<div class="abs" style="left:861px;top:238px;width:1px;height:5px;background:#fff"></div>
<div class="abs" style="left:861px;top:242px;width:5px;height:1px;background:#fff"></div>

</body></html>
